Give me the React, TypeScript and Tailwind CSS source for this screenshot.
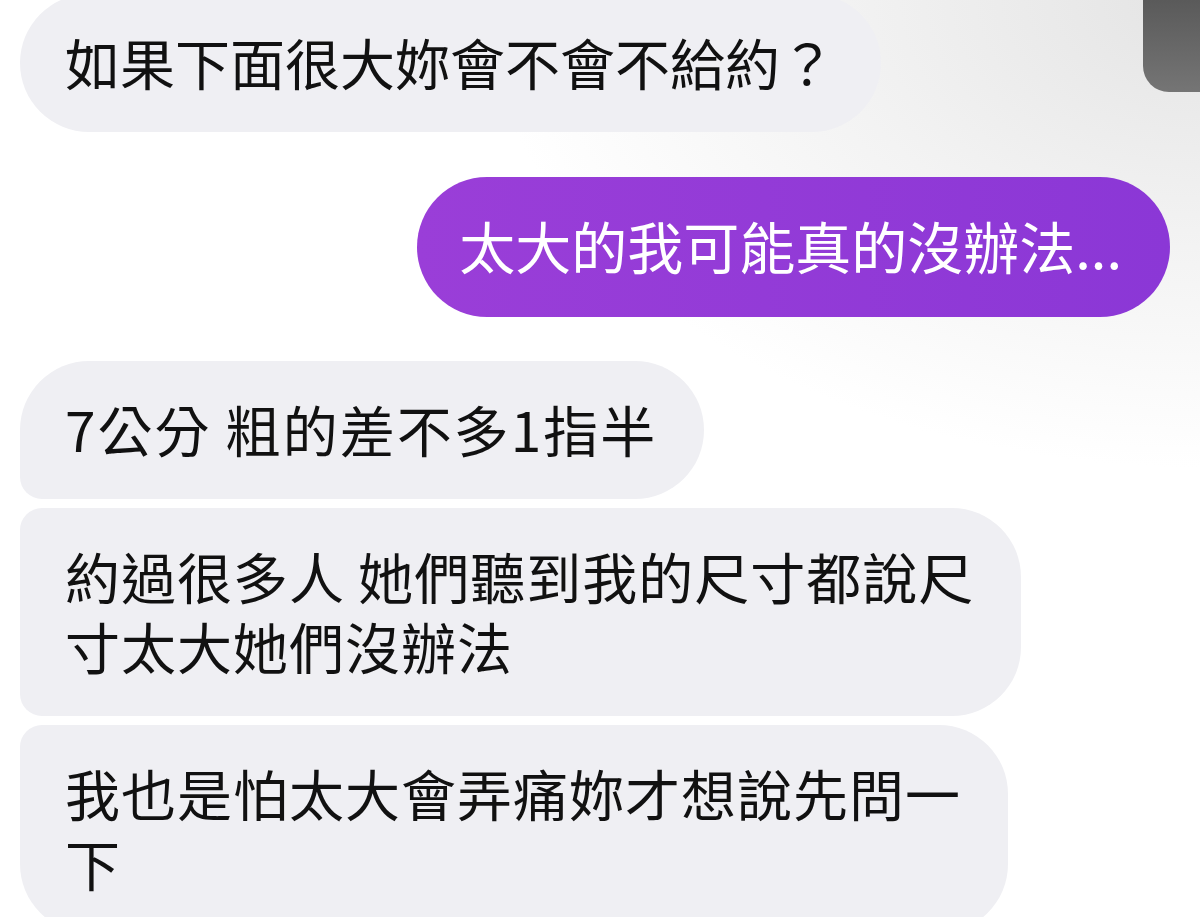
import React from 'react';

const font = { fontFamily: '"Noto Sans CJK TC", "Noto Sans CJK SC", "Liberation Sans", sans-serif' };

type Msg = {
  lines: string[];
  corners: string;
  tracking: string;
};

const received: Msg[] = [
  { lines: ['7公分 粗的差不多1指半'], corners: 'rounded-[69px] rounded-bl-[22px]', tracking: 'tracking-[2px]' },
  { lines: ['約過很多人 她們聽到我的尺寸都說尺', '寸太大她們沒辦法'], corners: 'rounded-r-[69px] rounded-l-[22px]', tracking: 'tracking-[1px]' },
  { lines: ['我也是怕太大會弄痛妳才想說先問一', '下'], corners: 'rounded-r-[69px] rounded-tl-[22px] rounded-bl-[69px]', tracking: 'tracking-[1px]' },
];

function Bubble({ lines, corners, tracking }: Msg) {
  return (
    <div className={`self-start bg-[#efeff3] text-[#111] pl-[45px] pr-[47px] pt-[32px] pb-[36px] ${corners}`}>
      {lines.map((l, i) => (
        <div key={i} className={`whitespace-nowrap text-[55px] leading-[70px] ${tracking}`}>{l}</div>
      ))}
    </div>
  );
}

export default function App() {
  return (
    <div
      className="relative w-[1200px] h-[917px] overflow-hidden bg-[radial-gradient(ellipse_70%_60%_at_100%_0%,#e4e4e4_0%,#f3f3f3_45%,#ffffff_85%)]"
      style={font}
    >
      {/* scroll handle at top right */}
      <div className="absolute top-0 right-0 w-[57px] h-[92px] rounded-bl-[26px] bg-gradient-to-b from-[#5a5a5a] to-[#757575]" />

      <div className="flex flex-col pl-[20px] -mt-[6px]">
        {/* first received message */}
        <div className="self-start bg-[#efeff3] text-[#111] pl-[45px] pr-[46px] pt-[32px] pb-[36px] rounded-[69px]">
          <div className="whitespace-nowrap text-[55px] leading-[70px]">如果下面很大妳會不會不給約？</div>
        </div>

        {/* sent message */}
        <div className="self-end mr-[30px] mt-[45px] rounded-[70px] bg-gradient-to-r from-[#9a3ed8] to-[#8b37d6] text-white pl-[42px] pr-[48px] pt-[33px] pb-[37px]">
          <div className="whitespace-nowrap text-[56px] leading-[70px]">太大的我可能真的沒辦法...</div>
        </div>

        <div className="flex flex-col gap-[9px] mt-[44px]">
          {received.map((m, i) => (
            <Bubble key={i} {...m} />
          ))}
        </div>
      </div>
    </div>
  );
}
